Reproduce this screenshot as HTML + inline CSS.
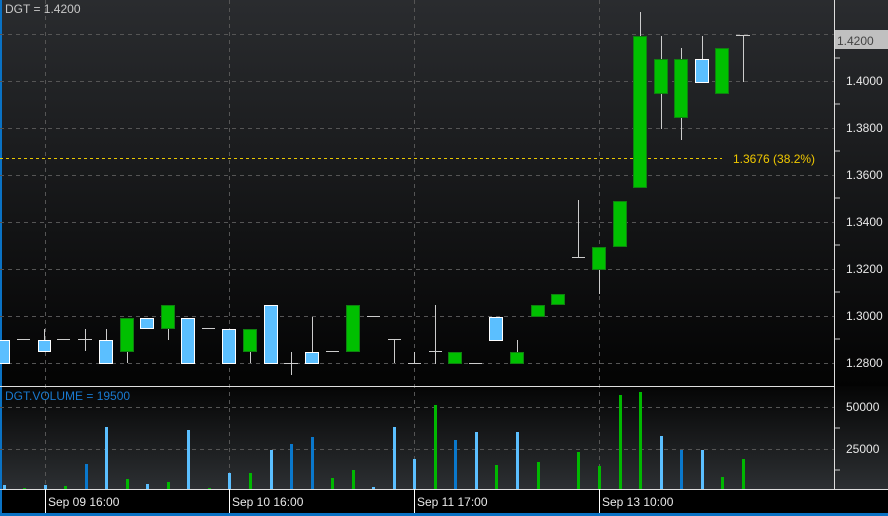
<!DOCTYPE html><html><head><style>body{margin:0;background:#000;width:888px;height:516px;overflow:hidden}svg{display:block}text{font-family:"Liberation Sans",sans-serif}</style></head><body>
<svg width="888" height="516" xmlns="http://www.w3.org/2000/svg">
<defs>
<linearGradient id="g1" x1="0" y1="0" x2="0" y2="1"><stop offset="0" stop-color="#2a2c2f"/><stop offset="1" stop-color="#030303"/></linearGradient>
<linearGradient id="g2" x1="0" y1="0" x2="0" y2="1"><stop offset="0" stop-color="#050505"/><stop offset="1" stop-color="#2c2f32"/></linearGradient>
</defs>
<rect x="0" y="0" width="888" height="386" fill="url(#g1)"/>
<rect x="0" y="386" width="888" height="103" fill="url(#g2)"/>
<rect x="0" y="489" width="888" height="24" fill="#000"/>
<rect x="0" y="513" width="888" height="3" fill="#0a72c4"/>
<rect x="0" y="0" width="2" height="516" fill="#0a72c4"/>
<g stroke="#555" stroke-dasharray="4,4" stroke-width="1">
<path d="M0 34.5H834M0 81.5H834M0 128.5H834M0 175.5H834M0 222.5H834M0 269.5H834M0 316.5H834M0 363.5H834M0 407.5H834M0 449.5H834"/>
<path d="M45.5 0V489M229.5 0V489M414.5 0V489M599.5 0V489"/>
</g>
<path d="M0 158.5H722" stroke="#e8c800" stroke-dasharray="3,3"/>
<text x="733" y="163" fill="#f0c800" font-size="12">1.3676 (38.2%)</text>
<path d="M834.5 0V489M0 386.5H834M0 489.5H888" stroke="#ddd" stroke-width="1"/>
<path d="M45.5 489V513M229.5 489V513M414.5 489V513M599.5 489V513" stroke="#fff"/>
<g stroke="#ccc" stroke-width="1">
<path d="M835 58h5M835 104h5M835 151h5M835 198h5M835 245h5M835 292h5M835 339h5M835 428h5M835 470h5"/>
</g>
<g fill="#e8e8e8" font-size="12">
<text x="846" y="85">1.4000</text><text x="846" y="132">1.3800</text><text x="846" y="179">1.3600</text><text x="846" y="226">1.3400</text><text x="846" y="273">1.3200</text><text x="846" y="320">1.3000</text><text x="846" y="367">1.2800</text>
<text x="846" y="411">50000</text><text x="846" y="453">25000</text>
<text x="48" y="506">Sep 09 16:00</text><text x="232" y="506">Sep 10 16:00</text><text x="417" y="506">Sep 11 17:00</text><text x="602" y="506">Sep 13 10:00</text>
</g>
<rect x="835" y="30" width="53" height="19" fill="#c0c0c0"/>
<text x="837" y="45" fill="#444" font-size="12">1.4200</text>
<text x="5" y="13" fill="#c8c8c8" font-size="12">DGT = 1.4200</text>
<text x="5" y="400" fill="#1a7ad0" font-size="12">DGT.VOLUME = 19500</text>
<!-- wicks -->
<g stroke="#ccc" stroke-width="1">
<path d="M17 339.5h13M44.5 329V340M57 339.5h13M78 339.5h14M85.5 329V351M106.5 329V340M127.5 351V363M168.5 328V340M202 328.5h13M250.5 351V363M284 363.5h14M291.5 352V375M312.5 317V352M326 351.5h13M367 316.5h13M388 339.5h13M394.5 339V363M408 363.5h13M414.5 352V363M429 351.5h13M435.5 305V364M469 363.5h13M517.5 340V352M572 257.5h13M578.5 200V257M599.5 269V294M640.5 12V36M661.5 36V129M681.5 48V140M702.5 36V59M736 35.5h14M743.5 35V82"/>
</g>
<!-- blue bodies -->
<g fill="#5bbfff" stroke="#fff" stroke-width="1">
<rect x="-3.5" y="340.5" width="13" height="23"/><rect x="38.5" y="340.5" width="12" height="11"/><rect x="99.5" y="340.5" width="13" height="23"/><rect x="140.5" y="318.5" width="13" height="10"/><rect x="181.5" y="318.5" width="13" height="45"/><rect x="222.5" y="329.5" width="13" height="34"/><rect x="264.5" y="305.5" width="13" height="58"/><rect x="305.5" y="352.5" width="13" height="11"/><rect x="489.5" y="317.5" width="13" height="23"/><rect x="695.5" y="59.5" width="13" height="23"/>
</g>
<!-- green bodies -->
<g fill="#00c000" stroke="#108010" stroke-width="1">
<rect x="120.5" y="318.5" width="13" height="33"/><rect x="161.5" y="305.5" width="13" height="23"/><rect x="243.5" y="329.5" width="13" height="22"/><rect x="346.5" y="305.5" width="13" height="46"/><rect x="448.5" y="352.5" width="13" height="11"/><rect x="510.5" y="352.5" width="13" height="11"/><rect x="531.5" y="305.5" width="13" height="11"/><rect x="551.5" y="294.5" width="13" height="10"/><rect x="592.5" y="247.5" width="13" height="22"/><rect x="613.5" y="201.5" width="13" height="45"/><rect x="633.5" y="36.5" width="13" height="151"/><rect x="654.5" y="59.5" width="13" height="34"/><rect x="674.5" y="59.5" width="13" height="58"/><rect x="715.5" y="48.5" width="13" height="45"/>
</g>
<!-- volume -->
<g fill="#00b800">
<rect x="23" y="488" width="3" height="1"/><rect x="64" y="486" width="3" height="3"/><rect x="126" y="479" width="3" height="10"/><rect x="167" y="482" width="3" height="7"/><rect x="208" y="488" width="3" height="1"/><rect x="249" y="473" width="3" height="16"/><rect x="331" y="478" width="3" height="11"/><rect x="352" y="470" width="3" height="19"/><rect x="434" y="405" width="3" height="84"/><rect x="495" y="465" width="3" height="24"/><rect x="537" y="462" width="3" height="27"/><rect x="577" y="452" width="3" height="37"/><rect x="598" y="466" width="3" height="23"/><rect x="619" y="395" width="3" height="94"/><rect x="639" y="392" width="3" height="97"/><rect x="721" y="477" width="3" height="12"/><rect x="742" y="459" width="3" height="30"/>
</g>
<g fill="#5bbfff">
<rect x="3" y="485" width="3" height="4"/><rect x="44" y="485" width="3" height="4"/><rect x="105" y="427" width="3" height="62"/><rect x="146" y="484" width="3" height="5"/><rect x="187" y="430" width="3" height="59"/><rect x="228" y="473" width="3" height="16"/><rect x="270" y="450" width="3" height="39"/><rect x="372" y="487" width="3" height="2"/><rect x="393" y="427" width="3" height="62"/><rect x="413" y="459" width="3" height="30"/><rect x="475" y="432" width="3" height="57"/><rect x="516" y="432" width="3" height="57"/><rect x="660" y="436" width="3" height="53"/><rect x="701" y="450" width="3" height="39"/>
</g>
<g fill="#0a78cc">
<rect x="85" y="464" width="3" height="25"/><rect x="290" y="444" width="3" height="45"/><rect x="311" y="437" width="3" height="52"/><rect x="454" y="440" width="3" height="49"/><rect x="680" y="450" width="3" height="39"/>
</g>
</svg>
</body></html>
